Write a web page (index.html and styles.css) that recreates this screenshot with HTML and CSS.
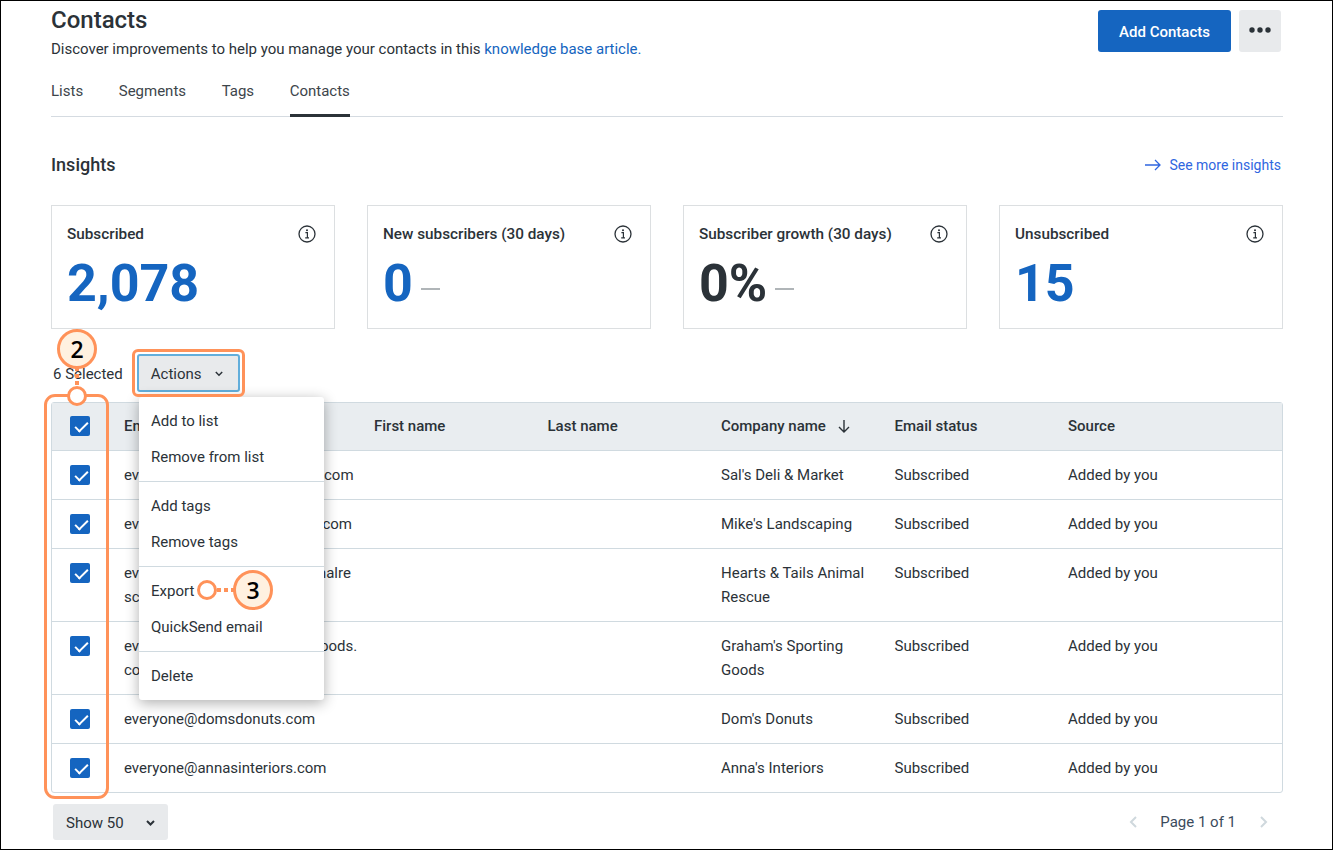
FILE: index.html
```html
<!DOCTYPE html>
<html lang="en">
<head>
    <meta charset="UTF-8">
    <title>Contacts</title>
    <link rel="stylesheet" href="styles.css">
</head>
<body>
    <div class="page">
        <!-- Title -->
        <header class="page-head">
            <div>
                <h1 class="page-title">Contacts</h1>
                <p class="page-sub">Discover improvements to help you manage your contacts in this <a class="link" href="#">knowledge base article.</a></p>
            </div>
            <div class="head-actions">
                <button class="btn-primary">Add Contacts</button>
                <button class="btn-more" aria-label="More">
                    <svg width="22" height="6" viewBox="0 0 22 6"><circle cx="3" cy="3" r="2.7"/><circle cx="11" cy="3" r="2.7"/><circle cx="19" cy="3" r="2.7"/></svg>
                </button>
            </div>
        </header>

        <nav class="tabs">
            <a class="tab" href="#">Lists</a>
            <a class="tab" href="#">Segments</a>
            <a class="tab" href="#">Tags</a>
            <a class="tab active" href="#">Contacts</a>
        </nav>

        <!-- Insights -->
        <div class="insights-head">
            <h2 class="insights-title">Insights</h2>
            <a class="more-link" href="#">
                <svg width="16" height="12" viewBox="0 0 16 12" fill="none" stroke="currentColor" stroke-width="1.3"><path d="M0 6h15M10 1l5 5-5 5"/></svg>
                See more insights
            </a>
        </div>

        <div class="cards">
            <div class="card">
                <div class="card-top">
                    <span class="card-label">Subscribed</span>
                    <svg class="info" width="18" height="18" viewBox="0 0 18 18"><use href="#info-icon"/></svg>
                </div>
                <div class="card-value">2,078</div>
            </div>
            <div class="card">
                <div class="card-top">
                    <span class="card-label">New subscribers (30 days)</span>
                    <svg class="info" width="18" height="18" viewBox="0 0 18 18"><use href="#info-icon"/></svg>
                </div>
                <div class="card-value">0<span class="trend"></span></div>
            </div>
            <div class="card">
                <div class="card-top">
                    <span class="card-label">Subscriber growth (30 days)</span>
                    <svg class="info" width="18" height="18" viewBox="0 0 18 18"><use href="#info-icon"/></svg>
                </div>
                <div class="card-value dark">0%<span class="trend"></span></div>
            </div>
            <div class="card">
                <div class="card-top">
                    <span class="card-label">Unsubscribed</span>
                    <svg class="info" width="18" height="18" viewBox="0 0 18 18"><use href="#info-icon"/></svg>
                </div>
                <div class="card-value">15</div>
            </div>
        </div>

        <!-- Bulk actions -->
        <div class="toolbar">
            <span class="selected-count">6 Selected</span>
            <button class="btn-actions">Actions
                <svg width="8" height="6" viewBox="0 0 8 6" fill="none" stroke="currentColor" stroke-width="1.5"><path d="M.8 1l3.2 3.2L7.2 1"/></svg>
            </button>
        </div>

        <!-- Contacts table -->
        <div class="table-wrap">
            <table class="contacts">
                <colgroup>
                    <col class="col-check"><col class="col-email"><col class="col-name"><col class="col-name"><col class="col-name"><col class="col-name"><col>
                </colgroup>
                <thead>
                    <tr>
                        <th><span class="check"></span></th>
                        <th>Email</th>
                        <th>First name</th>
                        <th>Last name</th>
                        <th>Company name
                            <svg class="sort" width="12" height="13" viewBox="0 0 12 13" fill="none" stroke="currentColor" stroke-width="1.4"><path d="M6 0v12M1 7l5 5 5-5"/></svg>
                        </th>
                        <th>Email status</th>
                        <th>Source</th>
                    </tr>
                </thead>
                <tbody>
                    <tr>
                        <td><span class="check"></span></td>
                        <td>everyone@salsdeliandmarket.com</td>
                        <td></td><td></td>
                        <td>Sal's Deli &amp; Market</td>
                        <td>Subscribed</td>
                        <td>Added by you</td>
                    </tr>
                    <tr>
                        <td><span class="check"></span></td>
                        <td>everyone@mikeslandscaping.com</td>
                        <td></td><td></td>
                        <td>Mike's Landscaping</td>
                        <td>Subscribed</td>
                        <td>Added by you</td>
                    </tr>
                    <tr>
                        <td><span class="check"></span></td>
                        <td>everyone@heartsandtailsanimalre<br>scue.com</td>
                        <td></td><td></td>
                        <td>Hearts &amp; Tails Animal Rescue</td>
                        <td>Subscribed</td>
                        <td>Added by you</td>
                    </tr>
                    <tr>
                        <td><span class="check"></span></td>
                        <td>everyone@grahamssportinggoods.<br>com</td>
                        <td></td><td></td>
                        <td>Graham's Sporting Goods</td>
                        <td>Subscribed</td>
                        <td>Added by you</td>
                    </tr>
                    <tr>
                        <td><span class="check"></span></td>
                        <td>everyone@domsdonuts.com</td>
                        <td></td><td></td>
                        <td>Dom's Donuts</td>
                        <td>Subscribed</td>
                        <td>Added by you</td>
                    </tr>
                    <tr>
                        <td><span class="check"></span></td>
                        <td>everyone@annasinteriors.com</td>
                        <td></td><td></td>
                        <td>Anna's Interiors</td>
                        <td>Subscribed</td>
                        <td>Added by you</td>
                    </tr>
                </tbody>
            </table>
        </div>

        <footer class="table-foot">
            <button class="btn-show">Show 50
                <svg width="9" height="6" viewBox="0 0 9 6" fill="none" stroke="currentColor" stroke-width="2"><path d="M1 1l3.5 3.5L8 1"/></svg>
            </button>
            <div class="pager">
                <svg width="8" height="12" viewBox="0 0 8 12" fill="none" stroke="currentColor" stroke-width="2"><path d="M7 1L2 6l5 5"/></svg>
                <span>Page 1 of 1</span>
                <svg width="8" height="12" viewBox="0 0 8 12" fill="none" stroke="currentColor" stroke-width="2"><path d="M1 1l5 5-5 5"/></svg>
            </div>
        </footer>

        <!-- Actions dropdown -->
        <ul class="menu">
            <li class="menu-group"><a>Add to list</a><a>Remove from list</a></li>
            <li class="menu-group"><a>Add tags</a><a>Remove tags</a></li>
            <li class="menu-group"><a>Export</a><a>QuickSend email</a></li>
            <li class="menu-group"><a>Delete</a></li>
        </ul>

        <!-- Callouts drawn on top of the screenshot -->
        <div class="mark-box mark-checks"></div>
        <div class="mark-box mark-actions"></div>
        <div class="mark-line mark-line-2"></div>
        <div class="mark-dot mark-dot-2"></div>
        <div class="mark-badge mark-badge-2">2</div>
        <div class="mark-line mark-line-3"></div>
        <div class="mark-dot mark-dot-3"></div>
        <div class="mark-badge mark-badge-3">3</div>
    </div>

    <svg class="defs" width="0" height="0">
        <symbol id="info-icon" viewBox="0 0 18 18">
            <circle cx="9" cy="9" r="8" fill="none" stroke="currentColor" stroke-width="1.3"/>
            <circle cx="9" cy="5.2" r="1" fill="currentColor"/>
            <path d="M7.4 7.7H9.4V12.8M7.2 12.9H11" fill="none" stroke="currentColor" stroke-width="1.2"/>
        </symbol>
    </svg>
</body>
</html>
```

FILE: styles.css
```css
:root {
    --ink: #2b3238;
    --blue: #1565c0;
    --link: #2f66e0;
    --line: #d0dae0;
    --grey-btn: #e8eaec;
    --orange: #ff9259;
    --cream: #fff1e0;
}

* {
    box-sizing: border-box;
}

body {
    margin: 0;
    font-family: Roboto, "Liberation Sans", sans-serif;
    font-size: 15px;
    color: var(--ink);
    background: #fff;
}

.page {
    position: relative;
    width: 1333px;
    height: 850px;
    padding: 0 49px 0 50px;
    border: 1px solid #000;
    overflow: hidden;
}

.defs {
    position: absolute;
}

/* Title */
.page-head {
    display: flex;
    justify-content: space-between;
    padding-right: 2px;
    height: 64px;
}

.page-title {
    margin: 7px 0 0;
    font-size: 24px;
    line-height: 24px;
    font-weight: 500;
}

.page-sub {
    margin: 5px 0 0;
    line-height: 24px;
    letter-spacing: -0.01px;
}

.link {
    color: var(--blue);
    text-decoration: none;
}

.head-actions {
    display: flex;
    gap: 8px;
    padding-top: 9px;
}

.btn-primary {
    width: 133px;
    height: 42px;
    padding: 2px 0 0;
    border: none;
    border-radius: 3px;
    background: var(--blue);
    color: #fff;
    font: 500 15px Roboto, sans-serif;
}

.btn-more {
    display: flex;
    align-items: center;
    justify-content: center;
    width: 42px;
    height: 42px;
    padding: 0 0 2px;
    border: none;
    border-radius: 3px;
    background: var(--grey-btn);
    fill: var(--ink);
}

/* Tabs */
.tabs {
    display: flex;
    gap: 35.6px;
    height: 52px;
    border-bottom: 1px solid #d5dbe1;
}

.tab {
    height: 52px;
    padding-top: 14px;
    line-height: 24px;
    color: #3d454b;
    text-decoration: none;
}

.tab.active {
    border-bottom: 3px solid var(--ink);
}

/* Insights */
.insights-head {
    display: flex;
    align-items: center;
    justify-content: space-between;
    height: 24px;
    margin-top: 36px;
    padding-right: 2px;
}

.insights-title {
    margin: -2px 0 0;
    font-size: 18px;
    font-weight: 500;
}

.more-link {
    display: flex;
    align-items: center;
    gap: 8px;
    font-size: 14px;
    color: var(--link);
    text-decoration: none;
}

.cards {
    display: grid;
    grid-template-columns: repeat(4, 284px);
    gap: 32px;
    margin-top: 28px;
}

.card {
    height: 124px;
    padding: 18px 18px 0 15px;
    border: 1px solid #dcdfe1;
}

.card-top {
    display: flex;
    align-items: center;
    justify-content: space-between;
    height: 20px;
}

.card-label {
    font-size: 15.3px;
    font-weight: 500;
}

.info {
    color: var(--ink);
}

.card-value {
    display: flex;
    align-items: center;
    margin-top: 10px;
    font-size: 52px;
    line-height: 60px;
    font-weight: 700;
    color: var(--blue);
}

.card-value.dark {
    color: var(--ink);
}

.trend {
    width: 19px;
    height: 2px;
    margin: 10px 0 0 8px;
    background: #b0b5b8;
}

/* Bulk actions */
.toolbar {
    display: flex;
    align-items: center;
    gap: 14px;
    height: 38px;
    margin-top: 25px;
    padding-left: 2px;
}

.selected-count {
    padding-top: 2px;
}

.btn-actions {
    display: flex;
    align-items: center;
    gap: 13px;
    width: 103px;
    height: 38px;
    padding: 1px 0 0 12px;
    border: 2px solid #62aedb;
    border-radius: 3px;
    background: var(--grey-btn);
    color: var(--ink);
    font: 15px Roboto, sans-serif;
}

/* Contacts table */
.table-wrap {
    margin-top: 10px;
    border: 1px solid var(--line);
    border-radius: 3px;
}

.contacts {
    width: 100%;
    table-layout: fixed;
    border-collapse: separate;
    border-spacing: 0;
}

.col-check { width: 60px; }
.col-email { width: 250px; }
.col-name { width: 173.5px; }

.contacts th,
.contacts td {
    padding: 12px;
    line-height: 24px;
    text-align: left;
    vertical-align: top;
    border-bottom: 1px solid var(--line);
}

.contacts th {
    padding: 11px 12px 12px;
    font-weight: 500;
    background: #e9edf0;
}

.contacts tbody tr:last-child td {
    border-bottom: none;
}

.contacts th:first-child,
.contacts td:first-child {
    padding-left: 18px;
    padding-right: 0;
}

.check {
    position: relative;
    display: block;
    width: 20px;
    height: 20px;
    margin-top: 2px;
    border-radius: 2px;
    background: var(--blue);
}

.check::after {
    content: "";
    position: absolute;
    left: 7.5px;
    top: 2.5px;
    width: 5px;
    height: 11px;
    border: solid #fff;
    border-width: 0 2px 2px 0;
    transform: rotate(45deg);
}

.sort {
    margin-left: 8px;
    vertical-align: -2px;
}

/* Footer */
.table-foot {
    display: flex;
    align-items: center;
    justify-content: space-between;
    margin-top: 11px;
    padding: 0 15px 0 2px;
}

.btn-show {
    display: flex;
    align-items: center;
    justify-content: space-between;
    width: 115px;
    height: 36px;
    padding: 2px 13px 0 13px;
    border: none;
    border-radius: 3px;
    background: var(--grey-btn);
    color: var(--ink);
    font: 15px Roboto, sans-serif;
}

.pager {
    display: flex;
    align-items: center;
    gap: 23px;
    color: #cfd8dd;
}

.pager span {
    margin-right: 1px;
    color: #3b4b5c;
}

/* Actions dropdown */
.menu {
    position: absolute;
    left: 138px;
    top: 396px;
    width: 185px;
    margin: 0;
    padding: 0;
    list-style: none;
    background: #fff;
    border-radius: 3px;
    box-shadow: 0 3px 14px rgba(0, 0, 0, 0.32);
}

.menu-group {
    padding: 6px 0;
    border-bottom: 1px solid var(--line);
}

.menu-group:last-child {
    border-bottom: none;
}

.menu-group a {
    display: block;
    padding: 0 12px;
    line-height: 36px;
}

/* Callouts */
.mark-box {
    position: absolute;
    border: 3px solid var(--orange);
}

.mark-checks {
    left: 43px;
    top: 393px;
    width: 65px;
    height: 405px;
    border-radius: 11px;
}

.mark-actions {
    left: 131px;
    top: 348px;
    width: 113px;
    height: 48px;
    border-radius: 6px;
}

.mark-badge {
    position: absolute;
    width: 40px;
    height: 40px;
    border: 3px solid var(--orange);
    border-radius: 50%;
    background: var(--cream);
    color: #000;
    font: 600 23px/34px "Open Sans", sans-serif;
    text-align: center;
}

.mark-badge-2 { left: 56px; top: 328px; }
.mark-badge-3 { left: 232px; top: 569px; }

.mark-dot {
    position: absolute;
    width: 20px;
    height: 20px;
    border: 3px solid var(--orange);
    border-radius: 50%;
    background: #fff;
}

.mark-dot-2 { left: 66px; top: 385px; }
.mark-dot-3 { left: 196px; top: 579px; }

.mark-line {
    position: absolute;
}

.mark-line-2 {
    left: 74px;
    top: 366px;
    width: 4px;
    height: 22px;
    background: repeating-linear-gradient(var(--orange) 0 4px, transparent 4px 7px);
}

.mark-line-3 {
    left: 216px;
    top: 587px;
    width: 18px;
    height: 4px;
    background: repeating-linear-gradient(90deg, var(--orange) 0 4px, transparent 4px 7px);
}
```
